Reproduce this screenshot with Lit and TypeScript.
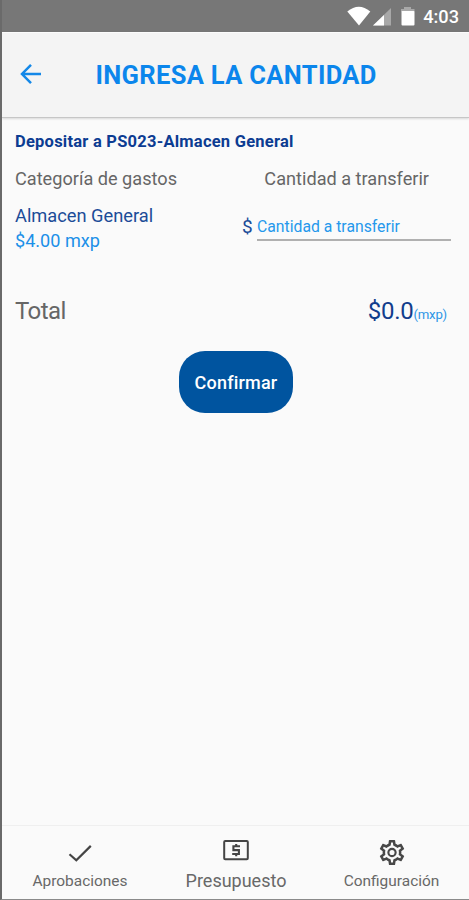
import { LitElement, html, css } from "lit";
import { customElement } from "lit/decorators.js";

@customElement("status-bar")
class StatusBar extends LitElement {
  static styles = css`
    :host { display: flex; height: 32px; background: #777; justify-content: flex-end; box-sizing: border-box; padding-right: 10px; }
    .icons { width: 76px; height: 32px; flex: none; }
    .time { font-size: 18.2px; font-weight: 500; line-height: 34px; color: #fff; white-space: nowrap; }
  `;
  render() {
    return html`
      <svg class="icons" viewBox="347 0 76 32">
        <path d="M347.300 11.500Q358.800 2 370.300 11.500L359 25.500Z" fill="#fff" />
        <path d="M391 8V25.500H373Z" fill="#a8a8a8" />
        <path d="M384 15V25.500H373Z" fill="#fff" />
        <path d="M404 7h7v2h3.500v3h-13.500v-3h3z" fill="#a8a8a8" />
        <rect x="401.500" y="11" width="13" height="14.500" rx="1" fill="#fff" />
      </svg>
      <span class="time">4:03</span>
    `;
  }
}

@customElement("bottom-nav")
class BottomNav extends LitElement {
  static styles = css`
    :host { display: grid; grid-template-columns: 156px 156px 155px; height: 74px; box-sizing: border-box; border-top: 1px solid #efefef; color: #686868; }
    .tab { display: flex; flex-direction: column; align-items: center; padding-top: 10px; }
    svg { width: 32px; height: 32px; fill: none; stroke: #444; stroke-width: 2; flex: none; }
    .label { font-size: 15.450px; line-height: 20px; margin-top: 3px; white-space: nowrap; }
    .active { font-size: 18px; }
  `;
  render() {
    return html`
      <div class="tab">
        <svg viewBox="0 0 32 32"><path d="M5.500 18.300L12.300 24.300L26.800 9.900" stroke-width="2.200" /></svg>
        <span class="label">Aprobaciones</span>
      </div>
      <div class="tab">
        <svg viewBox="0 0 32 32">
          <rect x="4.200" y="5" width="23.600" height="18.200" rx="1" />
          <path d="M20 10.200H13.400V14.100H18.900V18H12.200M16.200 8V10.200M16.200 18V20.200" stroke-width="2.100" />
        </svg>
        <span class="label active">Presupuesto</span>
      </div>
      <div class="tab">
        <svg viewBox="0 0 32 32">
          <g transform="translate(16 16.500) scale(1.250) translate(-12 -12)">
            <path stroke="none" fill="#484848" d="M19.430 12.980c.04-.32.07-.64.07-.98 0-.34-.03-.66-.07-.98l2.110-1.650c.19-.15.24-.42.12-.64l-2-3.460c-.09-.16-.26-.25-.44-.25-.06 0-.12.010-.17.030l-2.490 1c-.52-.4-1.080-.73-1.690-.98l-.38-2.650C14.460 2.180 14.250 2 14 2h-4c-.25 0-.46.18-.49.42l-.38 2.650c-.61.25-1.170.59-1.690.98l-2.490-1c-.06-.02-.12-.03-.18-.03-.17 0-.34.09-.43.25l-2 3.460c-.13.22-.07.49.12.64l2.110 1.650c-.04.32-.07.65-.07.98s.03.66.07.98l-2.110 1.650c-.19.15-.24.42-.12.640l2 3.460c.09.16.26.25.44.25.06 0 .12-.01.17-.03l2.490-1c.52.4 1.080.73 1.690.98l.38 2.650c.03.24.24.42.49.42h4c.25 0 .46-.18.49-.42l.38-2.650c.61-.25 1.170-.59 1.690-.98l2.490 1c.06.02.12.03.18.03.17 0 .34-.09.43-.25l2-3.460c.12-.22.07-.49-.12-.64l-2.110-1.650zm-1.980-1.710c.04.31.05.52.05.73s-.02.43-.05.73l-.14 1.130.89.7 1.080.84-.7 1.210-1.270-.51-1.040-.42-.9.68c-.43.32-.84.56-1.250.73l-1.060.43-.16 1.130-.2 1.350h-1.400l-.19-1.350-.16-1.130-1.060-.43c-.43-.18-.83-.41-1.230-.71l-.91-.7-1.060.43-1.270.51-.7-1.210 1.080-.84.89-.7-.14-1.130c-.03-.31-.05-.54-.05-.74s.02-.43.05-.73l.14-1.130-.89-.7-1.080-.84.7-1.210 1.270.51 1.040.42.9-.68c.43-.32.84-.56 1.250-.73l1.060-.43.16-1.130.2-1.350h1.390l.19 1.350.16 1.130 1.060.43c.43.18.83.41 1.230.71l.91.7 1.060-.43 1.270-.51.7 1.210-1.070.85-.89.7.14 1.130z" />
            <circle cx="12" cy="12" r="2.900" stroke="#484848" stroke-width="1.700" />
          </g>
        </svg>
        <span class="label">Configuración</span>
      </div>
    `;
  }
}

@customElement("app-root")
class AppRoot extends LitElement {
  static styles = css`
    :host { display: flex; flex-direction: column; box-sizing: border-box; width: 469px; height: 900px; border-left: 2px solid #6a6a6a; border-bottom: 1px solid #8a8a8a; background: #fafafa; font-family: Roboto, sans-serif; overflow: hidden; white-space: nowrap; }
    header { display: flex; align-items: center; height: 86px; box-sizing: border-box; background: #f4f4f4; border-top: 1px solid #fcfcfc; border-bottom: 1px solid #c6c6c6; box-shadow: 0 1px 2px #0002; padding-left: 18px; }
    .back { width: 22px; height: 22px; fill: none; stroke: #1488e8; stroke-width: 2.500; margin-bottom: 2px; }
    h1 { margin: 0 0 0 53.500px; font-size: 25.500px; line-height: 32px; font-weight: 700; letter-spacing: 0.330px; color: #0b86ec; }
    main { flex: 1; padding: 14px 18px 0 13px; color: #666; }
    h2 { margin: 0; font-size: 16.500px; line-height: 20px; font-weight: 700; letter-spacing: 0.230px; color: #0c3c92; }
    .heads { display: flex; justify-content: space-between; margin-top: 15px; padding-right: 22px; font-size: 18.150px; line-height: 24px; }
    .row { display: flex; justify-content: space-between; margin-top: 12px; }
    .name { font-size: 18.250px; line-height: 25px; color: #1c4c98; }
    .amount { font-size: 18.100px; line-height: 25px; color: #1c90e8; }
    .entry { display: flex; align-items: flex-end; height: 38px; }
    .sign { width: 15px; font-size: 19px; line-height: 29px; color: #1c4c98; }
    .field { width: 194px; height: 28px; box-sizing: border-box; border-bottom: 2px solid #b0b0b0; font-size: 15.750px; line-height: 27px; color: #2598ec; }
    .total { display: flex; justify-content: space-between; align-items: baseline; margin-top: 42px; padding-right: 4px; font-size: 24px; line-height: 32px; letter-spacing: -0.550px; }
    .sum { color: #123d8c; letter-spacing: -0.300px; }
    .unit { font-size: 13.200px; letter-spacing: -0.200px; color: #2e96e6; }
    button { display: block; margin: 20px 0 0 164px; width: 114px; height: 62px; border: 0; border-radius: 26px; background: #00549f; color: #fff; font: 500 18px Roboto, sans-serif; letter-spacing: 0.200px; padding: 1px 0 0; white-space: nowrap; }
  `;
  render() {
    return html`
      <status-bar></status-bar>
      <header>
        <svg class="back" viewBox="0 0 22 22"><path d="M21 11H2M11 1.800L2 11L11 20.200" /></svg>
        <h1>INGRESA LA CANTIDAD</h1>
      </header>
      <main>
        <h2>Depositar a PS023-Almacen General</h2>
        <div class="heads"><span>Categoría de gastos</span><span>Cantidad a transferir</span></div>
        <div class="row">
          <div><div class="name">Almacen General</div><div class="amount">$4.00 mxp</div></div>
          <div class="entry"><span class="sign">$</span><div class="field">Cantidad a transferir</div></div>
        </div>
        <div class="total"><span>Total</span><span class="sum">$0.0<span class="unit">(mxp)</span></span></div>
        <button>Confirmar</button>
      </main>
      <bottom-nav></bottom-nav>
    `;
  }
}
